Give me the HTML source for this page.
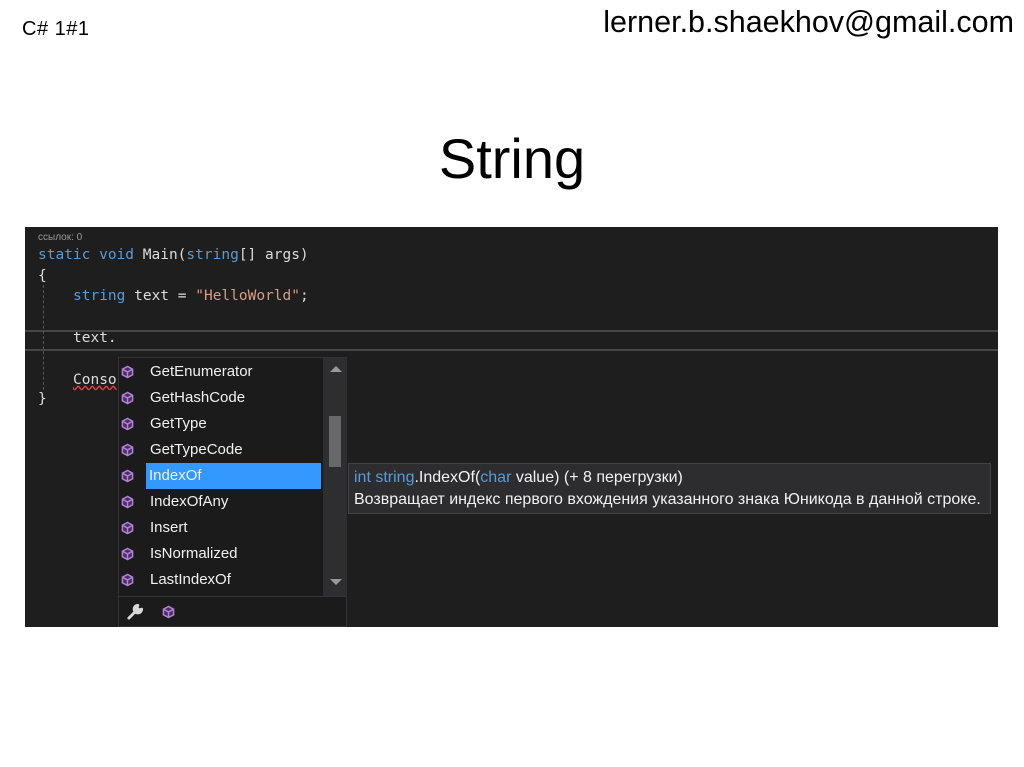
<!DOCTYPE html>
<html><head><meta charset="utf-8"><style>
*{margin:0;padding:0;box-sizing:border-box}
body{width:1024px;height:767px;background:#fff;position:relative;overflow:hidden;font-family:"Liberation Sans",sans-serif}
.abs{position:absolute;white-space:nowrap}
#panel{position:absolute;left:25px;top:227px;width:973px;height:400px;background:#1e1e1e}
.code{font-family:"DejaVu Sans Mono","Liberation Mono",monospace;font-size:14.5px;color:#dcdcdc;position:absolute;white-space:pre}
.kw{color:#569cd6}.str{color:#d69d85}
#popup{position:absolute;left:118px;top:357px;width:229px;height:270px;background:#1b1b1c;border:1px solid #333337}
.row{position:absolute;left:0;height:26px;width:204px;font-size:15px;color:#f1f1f1;line-height:26px}
.row span{position:absolute;left:30px;top:0;padding:0 2px}
.row svg{position:absolute;left:3px;top:6px}
.sel span{background:#3399ff;width:175px;left:28px;padding-left:3px}
#tip{position:absolute;left:348px;top:463px;width:643px;height:51px;background:#2d2d30;border:1px solid #434346;font-size:16px;color:#f1f1f1;padding:3px 0 0 5px;line-height:22px;font-family:"Liberation Sans",sans-serif;white-space:nowrap}
</style></head><body>
<div class="abs" style="left:22px;top:18px;font-size:20px;letter-spacing:0.5px">C# 1#1</div>
<div class="abs" style="right:10px;top:5px;font-size:30.5px">lerner.b.shaekhov@gmail.com</div>
<div class="abs" style="left:0;width:1024px;text-align:center;top:126px;font-size:56px">String</div>
<div id="panel">
 <div class="code" style="left:13px;top:5px;font-size:10px;color:#9a9a9a;font-family:'Liberation Sans',sans-serif">ссылок: 0</div>
 <div class="code" style="left:13px;top:20px"><span class="kw">static void</span> Main(<span class="kw">string</span>[] args)</div>
 <div class="code" style="left:13px;top:41px">{</div>
 <div class="code" style="left:48px;top:61px"><span class="kw">string</span> text = <span class="str">"HelloWorld"</span>;</div>
 <div style="position:absolute;left:0;top:103px;width:973px;height:21px;border-top:2px solid #464646;border-bottom:2px solid #464646"></div>
 <div class="code" style="left:48px;top:103px">text.</div>
 <div class="code" style="left:48px;top:145px;text-decoration:underline wavy #e04040">Conso</div>
 <div class="code" style="left:13px;top:164px">}</div>
 <div style="position:absolute;left:18px;top:58px;height:105px;border-left:1px dashed #555"></div>
</div>
<div id="popup">
 <div style="position:absolute;left:204px;top:0;width:24px;height:238px;background:#2e2e30"></div>
 <div style="position:absolute;left:211px;top:8px;width:0;height:0;border-left:6px solid transparent;border-right:6px solid transparent;border-bottom:6px solid #999"></div>
 <div style="position:absolute;left:211px;top:221px;width:0;height:0;border-left:6px solid transparent;border-right:6px solid transparent;border-top:6px solid #999"></div>
 <div style="position:absolute;left:210px;top:58px;width:12px;height:51px;background:#686868"></div>
 <div style="position:absolute;left:0;top:238px;width:228px;height:1px;background:#333337"></div>
</div>
<div id="rows" style="position:absolute;left:118px;top:359px"></div>
<svg class="abs" style="left:126px;top:602px" width="19" height="19" viewBox="0 0 20 20"><path d="M3 17L11 9 M12.5 3.5a4 4 0 1 0 4 4l-2.5 1-2.5-2.5 1-2.5z" fill="#d8d8d8" stroke="#d8d8d8" stroke-width="3" stroke-linecap="round" stroke-linejoin="round"/></svg>
<svg class="abs" style="left:162px;top:605px" width="13" height="14" viewBox="0 0 14 14"><path d="M7 1L12.5 4V10L7 13L1.5 10V4Z" fill="#4a2f5e"/><path d="M7 1L12.5 4V10L7 13L1.5 10V4Z M1.5 4L7 7L12.5 4 M7 7V13" fill="none" stroke="#b180d7" stroke-width="1.6"/></svg>
<div id="tip"><span style="color:#569cd6">int string</span>.IndexOf(<span style="color:#569cd6">char</span> value) (+ 8 перегрузки)<br>Возвращает индекс первого вхождения указанного знака Юникода в данной строке.</div>
<script>
var n=["GetEnumerator","GetHashCode","GetType","GetTypeCode","IndexOf","IndexOfAny","Insert","IsNormalized","LastIndexOf"],h="";
n.forEach(function(t,i){h+='<div class="row'+(i==4?' sel':'')+'" style="top:'+(i*26)+'px"><svg width="13" height="14" viewBox="0 0 14 14"><path d="M7 1L12.5 4V10L7 13L1.5 10V4Z" fill="#4a2f5e"/><path d="M7 1L12.5 4V10L7 13L1.5 10V4Z M1.5 4L7 7L12.5 4 M7 7V13" fill="none" stroke="#b180d7" stroke-width="1.6"/></svg><span>'+t+'</span></div>'});
document.getElementById("rows").innerHTML=h;
</script>
</body></html>
